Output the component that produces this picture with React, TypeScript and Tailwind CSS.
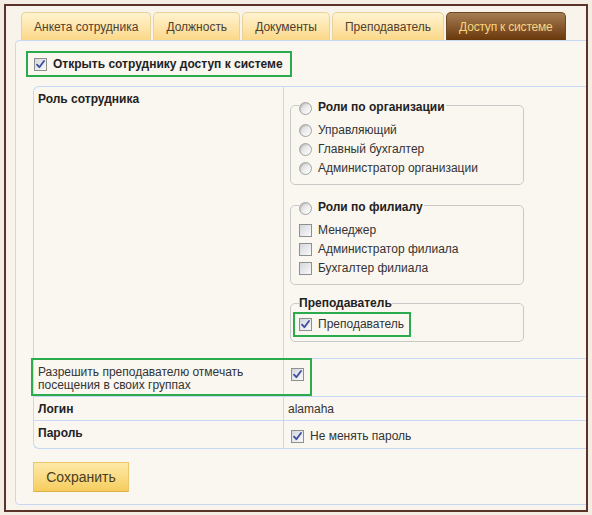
import React from "react";

const Check: React.FC<{ checked?: boolean }> = ({ checked }) => (
  <span className="inline-flex h-[13px] w-[13px] shrink-0 items-center justify-center border border-[#8e8f8f] bg-gradient-to-br from-[#d4d6dc] to-[#fafafa]">
    {checked && (
      <svg width="9" height="9" viewBox="0 0 9 9" fill="none">
        <path d="M1 4.6L3.4 7.2L8 1" stroke="#3b4fa0" strokeWidth="1.8" strokeLinecap="round" strokeLinejoin="round" />
      </svg>
    )}
  </span>
);

const Radio: React.FC = () => (
  <span className="inline-block h-[13px] w-[13px] shrink-0 rounded-full border border-[#a3a3a3] bg-gradient-to-br from-[#cdcdcd] via-[#ececec] to-white shadow-[inset_1px_1px_1px_rgba(0,0,0,0.12)]" />
);

const Tab: React.FC<{ label: string; active?: boolean }> = ({ label, active }) =>
  active ? (
    <div className="flex h-[28px] items-center whitespace-nowrap rounded-t-[5px] border border-b-0 border-[#6e4621] bg-gradient-to-b from-[#a67d52] to-[#693808] px-[12px] text-[12px] tracking-[-0.2px] text-[#f8d57e]">
      {label}
    </div>
  ) : (
    <div className="flex h-[28px] items-center whitespace-nowrap rounded-t-[5px] border border-b-0 border-[#e8d29a] bg-gradient-to-b from-[#fff3cf] to-[#fbd888] px-[12px] text-[12px] text-[#4f4030]">
      {label}
    </div>
  );

const App: React.FC = () => {
  return (
    <div className="h-[515px] w-[592px] bg-[#f4ede3] pl-[4px] pt-[4px] font-['Liberation_Sans',Arial,sans-serif]">
      <div className="h-[508px] w-[584px] overflow-hidden border-2 border-[#5c3328] bg-[#f9f4eb] pt-[5px]">
        {/* Tabs */}
        <div className="flex h-[29px] items-end gap-[2px] pl-[15px]">
          <Tab label="Анкета сотрудника" />
          <Tab label="Должность" />
          <Tab label="Документы" />
          <Tab label="Преподаватель" />
          <Tab label="Доступ к системе" active />
        </div>

        {/* Panel */}
        <div className="ml-[9px] h-[465px] w-[620px] rounded-[4px] border border-[#c6d8f4] bg-[#faf7f1] pt-[10px]">
          <div className="ml-[10px] inline-flex h-[26px] items-center gap-[6px] border-2 border-[#2bab4b] pl-[6px] pr-[7px]">
            <Check checked />
            <span className="text-[12px] font-bold text-[#222]">Открыть сотруднику доступ к системе</span>
          </div>

          {/* Table */}
          <div className="ml-[17px] mt-[9px] rounded-l-[6px] border-y border-l border-[#c6d8f4] text-[12px] leading-[15px]">
            {/* Role row */}
            <div className="flex h-[271px]">
              <div className="w-[250px] shrink-0 border-r border-[#c6d8f4] px-[4px] pt-[5px] font-bold text-[#222]">
                Роль сотрудника
              </div>
              <div className="flex-1 pl-[6px] pt-[8px]">
                <fieldset className="w-[234px] rounded-[5px] border border-[#c9c9c9] px-[8px] pb-[6px]">
                  <legend className="flex h-[20px] items-end gap-[6px] font-bold text-[#222]">
                    <Radio />
                    <span className="pr-[1px]">Роли по организации</span>
                  </legend>
                  <div className="pt-[6px] text-[#333]">
                    {["Управляющий", "Главный бухгалтер", "Администратор организации"].map((t) => (
                      <div key={t} className="flex h-[19px] items-center gap-[6px]">
                        <Radio />
                        <span>{t}</span>
                      </div>
                    ))}
                  </div>
                </fieldset>

                <fieldset className="mt-[10px] w-[234px] rounded-[5px] border border-[#c9c9c9] px-[8px] pb-[6px]">
                  <legend className="flex h-[20px] items-end gap-[6px] font-bold text-[#222]">
                    <Radio />
                    <span className="pr-[1px]">Роли по филиалу</span>
                  </legend>
                  <div className="pt-[6px] text-[#333]">
                    {["Менеджер", "Администратор филиала", "Бухгалтер филиала"].map((t) => (
                      <div key={t} className="flex h-[19px] items-center gap-[6px]">
                        <Check />
                        <span>{t}</span>
                      </div>
                    ))}
                  </div>
                </fieldset>

                <fieldset className="mt-[10px] w-[234px] rounded-[5px] border border-[#c9c9c9] px-[8px] pb-[4px]">
                  <legend className="flex h-[16px] items-center font-bold text-[#222]">Преподаватель</legend>
                  <div className="-ml-[6px] mt-[1px] inline-flex h-[25px] items-center gap-[6px] border-2 border-[#2bab4b] pl-[4px] pr-[5px] text-[#333]">
                    <Check checked />
                    <span>Преподаватель</span>
                  </div>
                </fieldset>
              </div>
            </div>

            {/* Allow attendance row */}
            <div className="relative flex h-[38px] border-t border-[#c6d8f4]">
              <div className="w-[250px] shrink-0 border-r border-[#c6d8f4] px-[4px] pt-[7px] text-[12px] leading-[13px] text-[#333]">
                Разрешить преподавателю отмечать
                <br />
                посещения в своих группах
              </div>
              <div className="flex-1 pl-[7px] pt-[9px]">
                <Check checked />
              </div>
              <div className="absolute -left-[3px] -top-[1px] h-[38px] w-[281px] border-2 border-[#2bab4b]" />
            </div>

            {/* Login row */}
            <div className="flex h-[24px] border-t border-[#c6d8f4]">
              <div className="w-[250px] shrink-0 border-r border-[#c6d8f4] px-[4px] pt-[5px] font-bold text-[#222]">
                Логин
              </div>
              <div className="flex-1 pl-[4px] pt-[5px] text-[#333]">alamaha</div>
            </div>

            {/* Password row */}
            <div className="flex h-[28px] border-t border-[#c6d8f4]">
              <div className="w-[250px] shrink-0 border-r border-[#c6d8f4] px-[4px] pt-[5px] font-bold text-[#222]">
                Пароль
              </div>
              <div className="flex flex-1 items-center gap-[6px] pl-[7px] pt-[4px] text-[#333]">
                <Check checked />
                <span>Не менять пароль</span>
              </div>
            </div>
          </div>

          <button className="ml-[17px] mt-[13px] h-[30px] w-[96px] border border-[#ecc66c] border-b-[#dcb04a] bg-gradient-to-b from-[#fdeaa8] to-[#f6cd5c] text-[14px] text-[#4a3c22]">
            Сохранить
          </button>
        </div>
      </div>
    </div>
  );
};

export default App;
